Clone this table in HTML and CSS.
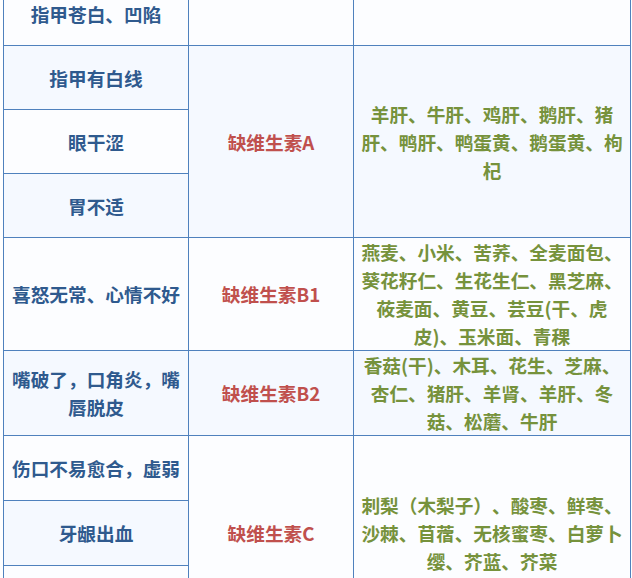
FILE: index.html
```html
<!DOCTYPE html>
<html lang="zh">
<head>
<meta charset="utf-8">
<title>维生素缺乏表</title>
<link rel="stylesheet" href="styles.css">
</head>
<body>
<table class="vt">
  <colgroup>
    <col class="c1">
    <col class="c2">
    <col class="c3">
  </colgroup>
  <tbody>
    <tr class="r r-w">
      <td class="sym">指甲苍白、凹陷</td>
      <td class="def"></td>
      <td class="food"></td>
    </tr>
    <tr class="r r-b">
      <td class="sym">指甲有白线</td>
      <td class="def" rowspan="3">缺维生素A</td>
      <td class="food" rowspan="3">羊肝、牛肝、鸡肝、鹅肝、猪肝、鸭肝、鸭蛋黄、鹅蛋黄、枸杞</td>
    </tr>
    <tr class="r r-w">
      <td class="sym">眼干涩</td>
    </tr>
    <tr class="r r-b">
      <td class="sym">胃不适</td>
    </tr>
    <tr class="r-w">
      <td class="sym">喜怒无常、心情不好</td>
      <td class="def">缺维生素B1</td>
      <td class="food">燕麦、小米、苦荞、全麦面包、葵花籽仁、生花生仁、黑芝麻、莜麦面、黄豆、芸豆(干、虎皮)、玉米面、青稞</td>
    </tr>
    <tr class="r-b">
      <td class="sym">嘴破了，口角炎，嘴唇脱皮</td>
      <td class="def">缺维生素B2</td>
      <td class="food">香菇(干)、木耳、花生、芝麻、杏仁、猪肝、羊肾、羊肝、冬菇、松蘑、牛肝</td>
    </tr>
    <tr class="rc r-w">
      <td class="sym">伤口不易愈合，虚弱</td>
      <td class="def" rowspan="3">缺维生素C</td>
      <td class="food" rowspan="3">刺梨（木梨子）、酸枣、鲜枣、沙棘、苜蓿、无核蜜枣、白萝卜缨、芥蓝、芥菜</td>
    </tr>
    <tr class="rc r-b">
      <td class="sym">牙龈出血</td>
    </tr>
    <tr class="rc r-w">
      <td class="sym"></td>
    </tr>
  </tbody>
</table>
</body>
</html>
```
FILE: styles.css
```css
html, body {
  margin: 0;
  padding: 0;
  background: #ffffff;
  overflow: hidden;
}

body {
  font-family: "Noto Sans CJK SC", "Noto Sans", sans-serif;
  font-weight: bold;
  font-size: 14pt;
  line-height: 28px;
  text-spacing-trim: space-all;
}

.vt {
  border-collapse: collapse;
  table-layout: fixed;
  width: 627px;
  margin: -19px 0 0 3px;
}

.c1 { width: 185px; }
.c2 { width: 165px; }
.c3 { width: 277px; }

.vt td {
  border: 1px solid #4f81bd;
  padding: 0 5px;
  text-align: center;
  vertical-align: middle;
}

.r { height: 64px; }
.rc { height: 65px; }

.r-w td { background: #fcfdff; }
.r-b td { background: #f5f9ff; }

.sym { color: #2f5a8e; }
.def { color: #c0504d; }
.food { color: #76923c; }
```
